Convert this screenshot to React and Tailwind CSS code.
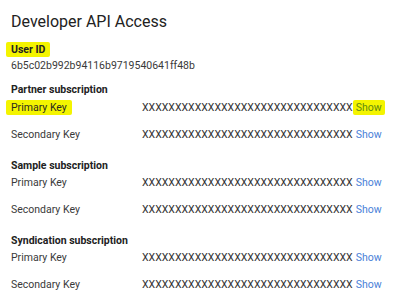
import React from "react";

const X = "XXXXXXXXXXXXXXXXXXXXXXXXXXXXXXXX";

function Row({ label, hlLabel, hlShow }) {
  return (
    <div className="flex items-center leading-[14px] h-[14px]">
      <div className="w-[131px] shrink-0 text-[#3a3a3a]">
        {hlLabel ? (
          <span className="bg-[#f4f400] rounded-[2px] px-[5px] -mx-[5px] py-[1px] text-[#2a2a20]">{label}</span>
        ) : (
          label
        )}
      </div>
      <div className="text-[#333] whitespace-nowrap">{X}</div>
      <div className="ml-[3px]">
        {hlShow ? (
          <span className="bg-[#f4f400] rounded-[2px] px-[3px] -mx-[3px] py-[1px] text-[#5f8a10]">Show</span>
        ) : (
          <span className="text-[#4a7fd8]">Show</span>
        )}
      </div>
    </div>
  );
}

function Section({ title, hl, firstGap }) {
  return (
    <div className="flex flex-col">
      <div className="font-bold text-[#222] leading-[14px] h-[14px]">{title}</div>
      <div className={`flex flex-col gap-[13px] ${firstGap}`}>
        <Row label="Primary Key" hlLabel={hl} hlShow={hl} />
        <Row label="Secondary Key" />
      </div>
    </div>
  );
}

export default function App() {
  return (
    <div
      className="w-[400px] h-[306px] bg-white overflow-hidden pl-[11px] pt-[12px] text-[10.5px]"
      style={{ fontFamily: "Roboto, 'Noto Sans', sans-serif" }}
    >
      <div className="text-[16px] leading-[20px] text-[#222]">Developer API Access</div>
      <div className="mt-[11px] leading-[14px] h-[14px] font-bold">
        <span className="bg-[#f4f400] rounded-[2px] px-[5px] -mx-[5px] py-[1px] text-[#222]">User ID</span>
      </div>
      <div className="mt-[2px] leading-[14px] h-[14px] text-[#3a3a3a]">6b5c02b992b94116b9719540641ff48b</div>
      <div className="mt-[10px] flex flex-col gap-[17px]">
        <Section title="Partner subscription" hl firstGap="mt-[4px]" />
        <Section title="Sample subscription" firstGap="mt-[3px]" />
        <Section title="Syndication subscription" firstGap="mt-[3px]" />
      </div>
    </div>
  );
}
